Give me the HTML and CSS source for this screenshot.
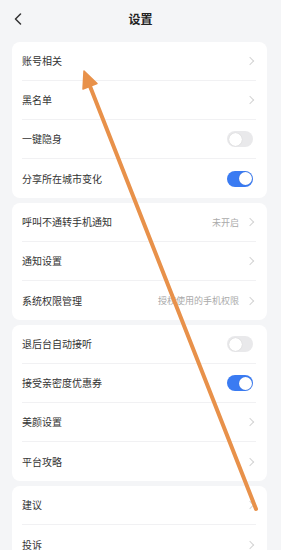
FILE: index.html
```html
<!DOCTYPE html>
<html lang="zh">
<head>
<meta charset="utf-8">
<title>设置</title>
<link rel="stylesheet" href="styles.css">
</head>
<body>
<div class="page">
  <header class="topbar">
    <svg class="back" width="8" height="12" viewBox="0 0 8 12"><polyline points="6.5,1 1.5,6 6.5,11" fill="none" stroke="#333" stroke-width="1.5" stroke-linecap="round" stroke-linejoin="round"/></svg>
    <h1 class="title">设置</h1>
  </header>

  <section class="card">
    <div class="row"><span class="label">账号相关</span><span class="chev"></span></div>
    <div class="row"><span class="label">黑名单</span><span class="chev"></span></div>
    <div class="row"><span class="label">一键隐身</span><span class="toggle"></span></div>
    <div class="row"><span class="label">分享所在城市变化</span><span class="toggle on"></span></div>
  </section>

  <section class="card">
    <div class="row"><span class="label">呼叫不通转手机通知</span><span class="value">未开启</span><span class="chev"></span></div>
    <div class="row"><span class="label">通知设置</span><span class="chev"></span></div>
    <div class="row"><span class="label">系统权限管理</span><span class="value">授权使用的手机权限</span><span class="chev"></span></div>
  </section>

  <section class="card">
    <div class="row"><span class="label">退后台自动接听</span><span class="toggle"></span></div>
    <div class="row"><span class="label">接受亲密度优惠券</span><span class="toggle on"></span></div>
    <div class="row"><span class="label">美颜设置</span><span class="chev"></span></div>
    <div class="row"><span class="label">平台攻略</span><span class="chev"></span></div>
  </section>

  <section class="card">
    <div class="row"><span class="label">建议</span><span class="chev"></span></div>
    <div class="row"><span class="label">投诉</span><span class="chev"></span></div>
  </section>

  <svg class="arrow" width="281" height="550" viewBox="0 0 281 550">
    <line x1="89.5" y1="85" x2="256" y2="509" stroke="#e8914a" stroke-width="4" stroke-linecap="round"/>
    <polygon points="84,71 97,83.5 83,89" fill="#e8914a" stroke="#e8914a" stroke-width="1.5" stroke-linejoin="round"/>
  </svg>
</div>
</body>
</html>
```

FILE: styles.css
```css
* { box-sizing: border-box; }
html, body {
  margin: 0;
  padding: 0;
  background: #f4f5f7;
  overflow: hidden;
}
body {
  font-family: "Noto Sans CJK SC", "Noto Sans", sans-serif;
  color: #333;
}
.page {
  position: relative;
  width: 281px;
  height: 550px;
  overflow: hidden;
}
.topbar {
  position: relative;
  height: 42px;
  display: flex;
  align-items: center;
  justify-content: center;
}
.back {
  position: absolute;
  left: 14px;
  top: 13px;
}
.title {
  margin: 0 0 4px 0;
  font-size: 12px;
  font-weight: 700;
  color: #222;
  line-height: 1;
}
.card {
  background: #fff;
  border-radius: 8px;
  margin: 0 14px 5px 12px;
}
.row {
  height: 39px;
  margin: 0 11px 0 10px;
  display: flex;
  align-items: center;
  border-bottom: 1px solid #f1f1f3;
}
.row:last-child { border-bottom: none; }
.label {
  flex: 1;
  font-size: 10px;
  color: #333;
  line-height: 1;
}
.value {
  font-size: 9px;
  color: #aaa;
  margin-right: 8px;
  line-height: 1;
}
.chev {
  width: 6px;
  height: 6px;
  border-top: 1.2px solid #d4d4d4;
  border-right: 1.2px solid #d4d4d4;
  transform: rotate(45deg);
  margin-right: 3px;
}
.toggle {
  position: relative;
  width: 26px;
  height: 16px;
  border-radius: 8px;
  background: #e9e9eb;
  margin-right: 3px;
}
.toggle::after {
  content: "";
  position: absolute;
  left: 1.5px;
  top: 1.5px;
  width: 13px;
  height: 13px;
  border-radius: 50%;
  background: #fff;
  box-shadow: 0 0 1px rgba(0,0,0,0.2);
}
.toggle.on { background: #3a7bf2; }
.toggle.on::after { left: 11.5px; }
.arrow {
  position: absolute;
  left: 0;
  top: 0;
  pointer-events: none;
}
```
